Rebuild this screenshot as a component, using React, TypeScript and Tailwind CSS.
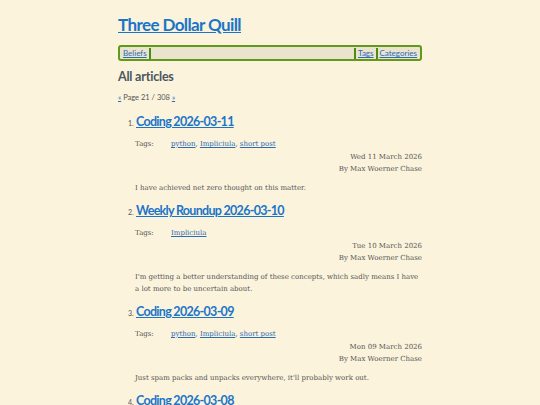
import * as React from "react";

type Article = {
  title: string;
  tags: string[];
  date: string;
  body: string;
};

const articles: Article[] = [
  {
    title: "Coding 2026-03-11",
    tags: ["python", "Impliciula", "short post"],
    date: "Wed 11 March 2026",
    body: "I have achieved net zero thought on this matter.",
  },
  {
    title: "Weekly Roundup 2026-03-10",
    tags: ["Impliciula"],
    date: "Tue 10 March 2026",
    body: "I'm getting a better understanding of these concepts, which sadly means I have a lot more to be uncertain about.",
  },
  {
    title: "Coding 2026-03-09",
    tags: ["python", "Impliciula", "short post"],
    date: "Mon 09 March 2026",
    body: "Just spam packs and unpacks everywhere, it'll probably work out.",
  },
  {
    title: "Coding 2026-03-08",
    tags: ["python"],
    date: "Sun 08 March 2026",
    body: "",
  },
];

const heading = "font-['Lato',sans-serif]";
const serif = "font-['DejaVu_Serif',serif]";

export default function App() {
  return (
    <div className="h-[405px] overflow-hidden bg-[#fbf3dc]">
      <div className="mx-auto w-[304px] pt-[14px]">
        <h1 className={`${heading} text-[17px] font-bold leading-[22px] tracking-[-0.6px]`}>
          <a href="#" className="text-[#1a75c9] underline">
            Three Dollar Quill
          </a>
        </h1>

        <nav className={`${heading} mt-[9px] flex h-[16px] items-center rounded-[3px] border-2 border-[#5f9a1c] bg-[#eae3cd] px-[1px] text-[8px] leading-none`}>
          <a href="#" className="px-[2px] text-[#2c6bb5] underline">Beliefs</a>
          <span className="h-[11px] w-[2px] bg-[#4d8a16]" />
          <span className="flex-1" />
          <span className="h-[11px] w-[2px] bg-[#4d8a16]" />
          <a href="#" className="px-[2px] text-[#2c6bb5] underline">Tags</a>
          <span className="h-[11px] w-[2px] bg-[#4d8a16]" />
          <a href="#" className="px-[2px] text-[#2c6bb5] underline">Categories</a>
        </nav>

        <h2 className={`${heading} mt-[8px] text-[12.5px] font-bold leading-[16px] tracking-[-0.2px] text-[#4b5660]`}>
          All articles
        </h2>

        <p className={`${heading} mt-[7px] text-[7.5px] leading-[12px] text-[#555]`}>
          <a href="#" className="text-[#2c6bb5] underline">«</a> Page 21 / 308{" "}
          <a href="#" className="text-[#2c6bb5] underline">»</a>
        </p>

        <ol className="mt-[10px] pl-[17px]">
          {articles.map((a, i) => (
            <li key={a.title} className="mb-[9px]">
              <div className="flex items-baseline">
                <span className={`${heading} -ml-[7px] mr-[1px] w-[7px] text-[7px] text-[#555]`}>{i + 1}.</span>
                <a
                  href="#"
                  className={`${heading} text-[12.5px] font-bold leading-[16px] tracking-[-0.7px] text-[#1a75c9] underline`}
                >
                  {a.title}
                </a>
              </div>
              <div className={`${serif} mt-[9px] flex text-[7px] leading-[10px] text-[#555]`}>
                <span className="w-[36px]">Tags:</span>
                <span>
                  {a.tags.map((t, j) => (
                    <React.Fragment key={t}>
                      <a href="#" className="text-[#2c6bb5] underline">{t}</a>
                      {j < a.tags.length - 1 ? ", " : ""}
                    </React.Fragment>
                  ))}
                </span>
              </div>
              <div className={`${serif} mt-[2px] text-right text-[7px] leading-[12px] text-[#555]`}>
                <div>{a.date}</div>
                <div>By Max Woerner Chase</div>
              </div>
              {a.body && (
                <p className={`${serif} mt-[7px] text-[7px] leading-[12px] text-[#555]`}>{a.body}</p>
              )}
            </li>
          ))}
        </ol>
      </div>
    </div>
  );
}
